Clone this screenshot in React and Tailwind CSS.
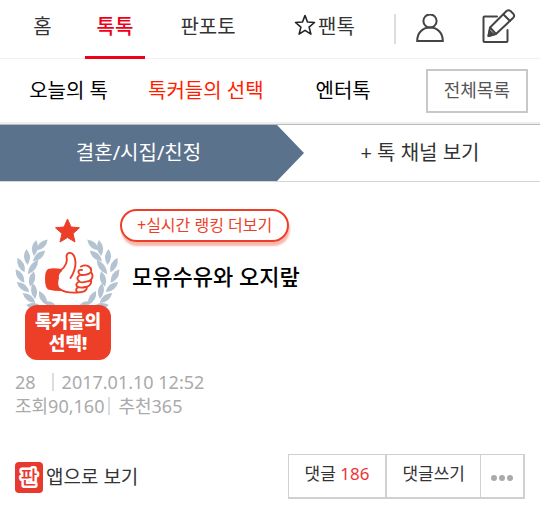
const TABS = [
  { label: '홈' },
  { label: '톡톡', active: true },
  { label: '판포토' },
  { label: '팬톡', star: true },
]

const SUB_TABS = [
  { label: '오늘의 톡' },
  { label: '톡커들의 선택', active: true },
  { label: '엔터톡' },
]

// leaves of the left branch: centre x, centre y, rotation, half length
const LEAVES = [
  [27, 27, 46, 8],
  [20, 30, 8, 8],
  [24, 38, 50, 8],
  [12, 39, -4, 8],
  [18, 49, 36, 9],
  [6, 47, -26, 8],
  [17, 61, 14, 8],
  [5, 58, -32, 8],
  [8, 69, -52, 8],
  [19, 73, -8, 8],
  [14, 80, -52, 8],
  [28, 80, -30, 8],
  [19, 88, -82, 8],
  [36, 87, -60, 7],
]

function StarIcon() {
  return (
    <svg width="22" height="22" viewBox="0 0 22 22" fill="none" stroke="#222" strokeWidth="1.6" strokeLinejoin="round" aria-hidden="true" className="mb-1">
      <path d="M11 1.500 13.500 8l7 .5-5.400 4.600 1.800 7L11 16.400l-5.900 3.700 1.800-7L1.500 8.500l7-.5Z" />
    </svg>
  )
}

function PersonIcon() {
  return (
    <svg width="28" height="30" viewBox="0 0 28 30" fill="none" stroke="#444" strokeWidth="2" aria-hidden="true">
      <circle cx="14" cy="7" r="6.6" />
      <path d="M1.200 27C1.200 19 6.500 13.600 14 13.600S26.800 19 26.800 27Z" />
    </svg>
  )
}

function WriteIcon() {
  return (
    <svg width="34" height="36" viewBox="0 0 34 36" fill="none" stroke="#444" strokeWidth="2" strokeLinejoin="round" strokeLinecap="round" aria-hidden="true">
      <path d="M15 7.500H2.500Q1.500 7.500 1.500 8.500V32Q1.500 33 2.500 33H24.500Q25.500 33 25.500 32V21" />
      <path d="M6.500 27 8 18.500 24.500 2Q26.500.5 28.500 2L31.500 5Q33 7 31 9L14 25Z" />
      <path d="m21.500 5.500 6.500 6.500M8.500 19l5 5.500" />
      <path d="m6.500 27 1-5 4 3.500Z" fill="#444" />
    </svg>
  )
}

function Branch() {
  return LEAVES.map(([x, y, angle, len]) => (
    <path
      key={`${x}-${y}`}
      d={`M0 ${-len}Q6 0 0 ${len}Q-6 0 0 ${-len}`}
      transform={`translate(${x} ${y}) rotate(${angle})`}
    />
  ))
}

function Badge() {
  return (
    <svg width="105" height="144" viewBox="0 0 105 144" role="img" aria-label="톡커들의 선택!" className="shrink-0">
      <g fill="#b4c3d1">
        <Branch />
        <g transform="translate(105 0) scale(-1 1)">
          <Branch />
        </g>
      </g>
      <path d="m52.500 1 3.500 8 8.500.8-6.500 5.800 2 8.400-7.500-4.500-7.500 4.500 2-8.400-6.500-5.800 8.500-.8Z" fill="#ed3e28" stroke="#ed3e28" strokeLinejoin="round" />
      <path d="M33 51Q38 49.500 47 51L46 73Q39 73 33 71.500 30 69 30 61 30 53 33 51Z" fill="#ed3e28" />
      <path
        d="M44 60C43 55 47 54 49 51 52 47 52.500 43 51.500 39 51.500 34 57 33 59.500 39 61 43 61 48 60 51L67 48C73 46 77 50 76 54 79 57 77 60 76 62 77 66 75 68 72 69 72 73 67 74.500 62 74.500 56 75 49 74 46 71 42 68 43 64 44 60Z"
        fill="#fff"
      />
      <path
        d="M45 53C51 49 52.500 43 51.500 39 51.500 34 57 33 59.500 39 61.500 45 60.500 49 59 53 58 56 57 58 55.500 60M66 48.500C72 45.500 77 49.500 76 53.500 75 57 70 57 66 57 62 55 63 51 67 52M76 54C79 58 77 62 74 63 70 64 67 65 65 64M76 62C77 67 73 69 70 69 67 70 64 69.500 62.500 68.500M72 69C72 73 67 74.500 62 74.500 56 75 50 74.500 45.500 71.500M65 57Q60 60 64.500 63.500 59 66 63 69.500 60 71 62 74"
        fill="none"
        stroke="#ed3e28"
        strokeWidth="1.9"
        strokeLinejoin="round"
        strokeLinecap="round"
      />
      <rect x="10" y="87" width="86" height="55" rx="12" fill="#ed3e28" />
      <text textAnchor="middle" fontWeight="900" fontSize="18" fill="#fff">
        <tspan x="53" y="110">톡커들의</tspan>
        <tspan x="53" y="132">선택!</tspan>
      </text>
    </svg>
  )
}

function AppIcon() {
  return (
    <svg width="28" height="32" viewBox="0 0 28 32" aria-hidden="true">
      <rect width="28" height="31" rx="4" fill="#e8392f" />
      <text x="14" y="22" textAnchor="middle" fontSize="18" fontWeight="500" fill="#e8392f" stroke="#fff" strokeWidth="5" paintOrder="stroke" strokeLinejoin="round">판</text>
    </svg>
  )
}

function TopBar() {
  return (
    <header className="flex h-[59px] border-b border-[#f0f0f0]">
      <nav className="grid flex-1 grid-cols-[85fr_60fr_126fr_107fr]">
        {TABS.map(tab => (
          <a
            key={tab.label}
            href="#"
            className={`flex h-[59px] items-center justify-center gap-0.5 border-b-3 pb-0.5 text-xl ${
              tab.active ? 'border-[#f00018] font-medium text-[#f00018]' : 'border-transparent text-[#333]'
            }`}
          >
            {tab.star && <StarIcon />}
            {tab.label}
          </a>
        ))}
      </nav>
      <div className="flex items-center pr-6 pb-px pl-4">
        <span className="mr-5 h-[30px] w-0.5 bg-[#ddd]" />
        <button aria-label="내 정보" className="mr-[38px]"><PersonIcon /></button>
        <button aria-label="글쓰기" className="pb-1"><WriteIcon /></button>
      </div>
    </header>
  )
}

function SubBar() {
  return (
    <div className="flex h-[63px] items-center pr-3">
      <nav className="grid flex-1 grid-cols-3 pr-3.5">
        {SUB_TABS.map(tab => (
          <a key={tab.label} href="#" className={`text-center text-xl ${tab.active ? 'text-[#ff1e00]' : 'text-black'}`}>
            {tab.label}
          </a>
        ))}
      </nav>
      <button className="h-11 border-2 border-[#c8c8c8] px-4 pb-0.5 text-lg text-[#555]">전체목록</button>
    </div>
  )
}

function ChannelBar() {
  return (
    <div className="border-t-2 border-[#eee]">
      <div className="flex h-[58px] items-stretch border-t border-b border-t-[#bbb] border-b-[#d5d5d5] text-xl">
        <a
          href="#"
          className="flex w-[56.3%] items-center justify-center bg-[#5b728d] pr-[27px] text-white [clip-path:polygon(0_0,calc(100%-27px)_0,100%_50%,calc(100%-27px)_100%,0_100%)]"
        >
          결혼/시집/친정
        </a>
        <a href="#" className="flex flex-1 items-center justify-center pr-1 text-[#333]">+ 톡 채널 보기</a>
      </div>
    </div>
  )
}

function Post() {
  return (
    <main className="px-[15px] pt-[27px]">
      <div className="flex">
        <div className="pt-[9px]"><Badge /></div>
        <div>
          <a href="#" className="inline-flex h-[33px] items-center rounded-full border-2 border-[#ed3e28] px-[15px] pb-px text-base text-[#ed3e28] shadow-[1px_4px_2px_#f8b8b0]">
            +실시간 랭킹 더보기
          </a>
          <h1 className="mt-4 ml-3 text-[22px] leading-9 font-medium text-black">모유수유와 오지랖</h1>
        </div>
      </div>
      <div className="mt-2 text-lg leading-6 text-[#aaa]">
        <p className="flex items-center">
          28<span className="mr-2 ml-4 h-[18px] w-0.5 bg-[#ddd]" />2017.01.10 12:52
        </p>
        <p className="flex items-center">
          조회90,160<span className="mr-2 ml-1 h-[18px] w-0.5 bg-[#ddd]" />추천365
        </p>
      </div>
    </main>
  )
}

function Actions() {
  return (
    <footer className="mt-9 flex items-center justify-between px-[15px] text-[#333]">
      <a href="#" className="flex items-center gap-[3px] pt-0.5 text-[19px]">
        <AppIcon />
        앱으로 보기
      </a>
      <div className="flex h-[45px] border-t border-r-2 border-b-2 border-l border-[#d0d0d0] text-[17px]">
        <button className="border-r-2 border-[#d0d0d0] px-4 pb-1">
          댓글 <span className="text-[#ee3338]">186</span>
        </button>
        <button className="border-r border-[#d0d0d0] px-[15px] pb-1">댓글쓰기</button>
        <button aria-label="더보기" className="flex items-center gap-0.5 px-2.5 pt-1">
          <span className="size-1.5 rounded-full bg-[#aaa]" />
          <span className="size-1.5 rounded-full bg-[#aaa]" />
          <span className="size-1.5 rounded-full bg-[#aaa]" />
        </button>
      </div>
    </footer>
  )
}

export default function App() {
  return (
    <div className="bg-white font-['Noto_Sans','Noto_Sans_CJK_KR',sans-serif]">
      <TopBar />
      <SubBar />
      <ChannelBar />
      <Post />
      <Actions />
    </div>
  )
}
